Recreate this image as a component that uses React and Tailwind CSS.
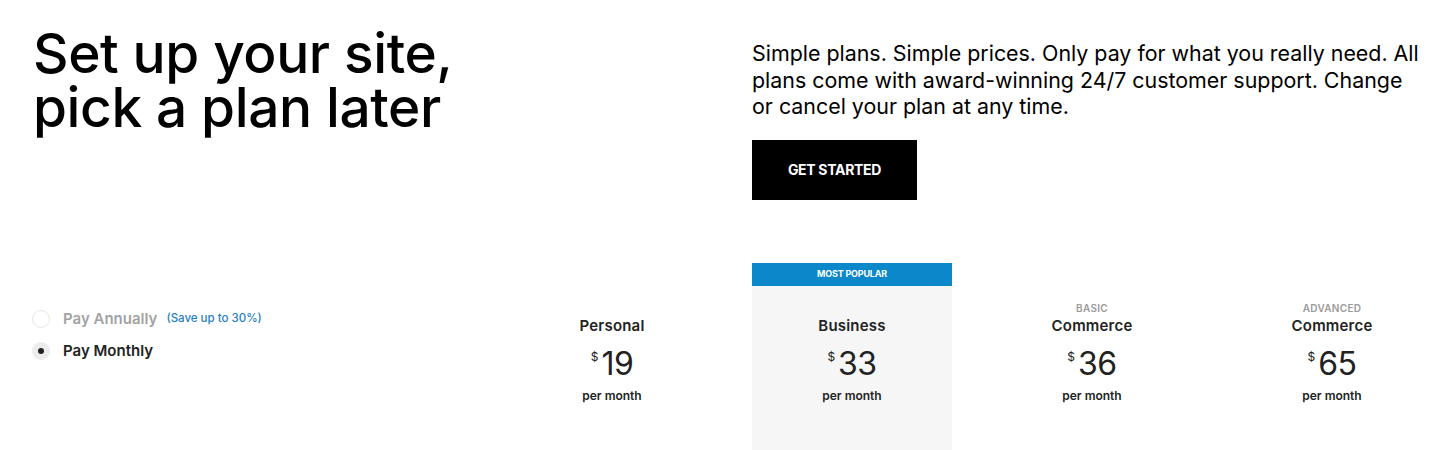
import React from "react";

const plans = [
  { pre: "", name: "Personal", price: "19", popular: false },
  { pre: "", name: "Business", price: "33", popular: true },
  { pre: "BASIC", name: "Commerce", price: "36", popular: false },
  { pre: "ADVANCED", name: "Commerce", price: "65", popular: false },
];

function Plan({ p }) {
  return (
    <div className="w-[240px] flex justify-center">
      <div className={`w-[200px] flex flex-col items-center ${p.popular ? "bg-[#f6f6f6]" : ""}`}>
        <div className={`w-full h-[23px] flex items-center justify-center text-[9px] font-bold text-white tracking-[-0.2px] ${p.popular ? "bg-[#0a88c9]" : ""}`}>
          {p.popular ? "MOST POPULAR" : ""}
        </div>
        <div className="h-[16px] mt-[14px] text-[10px] font-semibold text-[#9a9a9a] tracking-[0.3px] leading-[16px]">
          {p.pre}
        </div>
        <div className="text-[15px] font-semibold text-[#222] leading-[19px] tracking-[0.2px]">{p.name}</div>
        <div className="flex items-start mt-[12px] text-[#222]">
          <span className="text-[12px] leading-[14px] mt-[3px] mr-[3px]">$</span>
          <span className="text-[32px] font-normal leading-[34px] tracking-[-0.5px]">{p.price}</span>
        </div>
        <div className="mt-[7px] text-[12px] font-semibold text-[#222] leading-[16px]">per month</div>
        <div className="h-[60px]" />
      </div>
    </div>
  );
}

export default function App() {
  return (
    <div className="w-[1453px] h-[450px] bg-white overflow-hidden" style={{ fontFamily: "Inter, 'Liberation Sans', sans-serif" }}>
      <div className="flex pt-[26px]">
        <div className="w-[752px] pl-[33px]">
          <h1 className="text-[55px] font-medium leading-[54px] tracking-[-0.4px] text-black">
            Set up your site,
            <br />
            pick a plan later
          </h1>
        </div>
        <div className="w-[677px] pt-[14px]">
          <p className="text-[21.4px] leading-[26.5px] text-black">
            Simple plans. Simple prices. Only pay for what you really need. All plans come with award-winning 24/7 customer support. Change or cancel your plan at any time.
          </p>
          <button className="mt-[20px] w-[165px] h-[60px] bg-black text-white text-[14px] font-bold tracking-[-0.3px]">
            GET STARTED
          </button>
        </div>
      </div>
      <div className="flex mt-[63px]">
        <div className="w-[492px] pl-[32px] pt-[45px] flex flex-col gap-[10px]">
          <div className="flex items-center">
            <span className="w-[18px] h-[18px] rounded-full border border-[#e6e6e6] bg-white" />
            <span className="ml-[13px] text-[15px] font-semibold text-[#a3a3a3]">Pay Annually</span>
            <span className="ml-[9px] text-[11.5px] font-medium text-[#1f80c4]">(Save up to 30%)</span>
          </div>
          <div className="flex items-center">
            <span className="w-[18px] h-[18px] rounded-full bg-[#ececec] flex items-center justify-center">
              <span className="w-[6px] h-[6px] rounded-full bg-[#222]" />
            </span>
            <span className="ml-[13px] text-[15px] font-semibold text-[#222]">Pay Monthly</span>
          </div>
        </div>
        {plans.map((p, i) => (
          <Plan key={i} p={p} />
        ))}
      </div>
    </div>
  );
}
